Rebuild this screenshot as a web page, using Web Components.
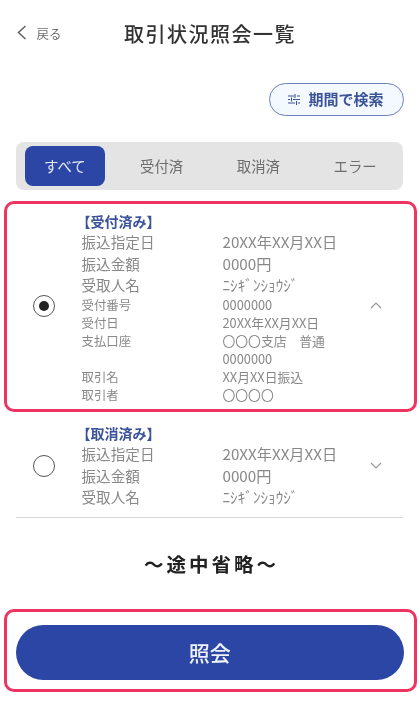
<!DOCTYPE html>
<html lang="ja">
<head>
<meta charset="utf-8">
<title>取引状況照会一覧</title>
<style>
  html, body { margin: 0; background: #fff; }
  /* the reference is a soft upscaled capture */
  body { font-family: "Noto Sans CJK JP", "Noto Sans", sans-serif; color: #777; filter: blur(0.4px); }
</style>
</head>
<body>
<app-header title-text="取引状況照会一覧" back="戻る"></app-header>
<search-button>期間で検索</search-button>
<tab-bar>
  <tab-item active>すべて</tab-item>
  <tab-item>受付済</tab-item>
  <tab-item>取消済</tab-item>
  <tab-item>エラー</tab-item>
</tab-bar>
<txn-item status="受付済み" checked open highlight>
  <txn-row label="振込指定日" value="20XX年XX月XX日"></txn-row>
  <txn-row label="振込金額" value="0000円"></txn-row>
  <txn-row label="受取人名" value="ﾆｼｷﾞﾝｼｮｳｼﾞ"></txn-row>
  <txn-row small label="受付番号" value="0000000"></txn-row>
  <txn-row small label="受付日" value="20XX年XX月XX日"></txn-row>
  <txn-row small label="支払口座" value="〇〇〇支店&#12288;普通 0000000"></txn-row>
  <txn-row small label="取引名" value="XX月XX日振込"></txn-row>
  <txn-row small label="取引者" value="〇〇〇〇"></txn-row>
</txn-item>
<txn-item status="取消済み">
  <txn-row label="振込指定日" value="20XX年XX月XX日"></txn-row>
  <txn-row label="振込金額" value="0000円"></txn-row>
  <txn-row label="受取人名" value="ﾆｼｷﾞﾝｼｮｳｼﾞ"></txn-row>
</txn-item>
<list-divider></list-divider>
<omit-note>〜途中省略〜</omit-note>
<submit-bar>照会</submit-bar>

<script>
// small helper so every element below gets an open shadow root
function shadow(el, html) {
  el.attachShadow({ mode: 'open' });
  el.shadowRoot.innerHTML = html;
}

class AppHeader extends HTMLElement {
  connectedCallback() {
    shadow(this, `
      <style>
        :host { display: grid; grid-template-columns: 1fr auto 1fr; align-items: center; box-sizing: border-box; height: 68px; padding: 0 17px 2px; }
        .back { display: flex; align-items: center; gap: 9.5px; font-size: 12.5px; color: #6e6e6e; }
        svg { width: 10px; height: 15px; margin-top: -2px; }
        h1 { margin: 0; font-size: 20px; font-weight: 500; letter-spacing: 1.5px; color: #333; }
      </style>
      <div class="back">
        <svg viewBox="0 0 10 15"><path d="M8.5 1 L1.5 7.5 L8.5 14" fill="none" stroke="#666" stroke-width="1.6"/></svg>
        <span>${this.getAttribute('back')}</span>
      </div>
      <h1>${this.getAttribute('title-text')}</h1>
      <div></div>
    `);
  }
}
customElements.define('app-header', AppHeader);

class SearchButton extends HTMLElement {
  connectedCallback() {
    shadow(this, `
      <style>
        :host { display: flex; justify-content: flex-end; padding: 15px 16.5px 0 0; }
        .btn { box-sizing: border-box; display: flex; align-items: center; justify-content: center; gap: 8px; width: 135px; height: 33px; padding-bottom: 2px;
          border: 1.5px solid #6a80c0; border-radius: 17px; background: #f4f8ff; color: #3a5399; font-size: 15px; font-weight: 700; }
        svg { width: 12px; height: 11px; margin-top: 2px; }
      </style>
      <div class="btn">
        <svg viewBox="0 0 12 11" fill="none" stroke="#3a5399" stroke-width="1.1">
          <path d="M0 2H6M9 2H12M7 0V4M0 5.5H2M5 5.5H12M3.5 3.5V7.5M0 9H7M10 9H12M8.5 7V11"/>
        </svg>
        <span><slot></slot></span>
      </div>
    `);
  }
}
customElements.define('search-button', SearchButton);

class TabBar extends HTMLElement {
  constructor() {
    super();
    shadow(this, `
      <style>
        :host { display: grid; grid-template-columns: repeat(4, 1fr); height: 48px; margin: 26px 17px 0 16px; background: #e4e4e4; border-radius: 8px; }
      </style>
      <slot></slot>
    `);
  }
}
customElements.define('tab-bar', TabBar);

class TabItem extends HTMLElement {
  constructor() {
    super();
    shadow(this, `
      <style>
        :host { display: flex; padding: 4px 8px 4px 9px; font-size: 14.4px; color: #6e6e6e; }
        div { flex: 1; display: flex; align-items: center; justify-content: center; padding-bottom: 2px; border-radius: 8px; }
        :host([active]) div { background: #2b46a5; color: #e8ecf8; }
      </style>
      <div><slot></slot></div>
    `);
  }
}
customElements.define('tab-item', TabItem);

class TxnItem extends HTMLElement {
  connectedCallback() {
    const chevron = this.hasAttribute('open') ? 'M1 7L6 2L11 7' : 'M1 2L6 7L11 2';
    shadow(this, `
      <style>
        :host { display: grid; grid-template-columns: 74.5px 1fr 48px; align-items: center; box-sizing: border-box; margin: 0 3px 0 4px;
          padding: 8.5px 0 6.5px; border: 3.5px solid transparent; border-radius: 10px; --shift: 0px; }
        :host([highlight]) { margin-top: 11px; padding: 7.5px 0 5.5px; border-color: #ee3561; --shift: 4px; }
        .radio { justify-self: end; box-sizing: border-box; width: 22px; height: 22px; margin: 0 26.5px var(--shift) 0; border: 1.6px solid #555; border-radius: 50%; display: flex; align-items: center; justify-content: center; }
        .dot { width: 10px; height: 10px; border-radius: 50%; background: #222; }
        h2 { margin: 0 0 0 -5px; height: 19.5px; line-height: 19.5px; font-size: 14px; font-weight: 700; color: #3a5399; }
        svg { width: 12px; height: 9px; justify-self: start; margin: 0 0 var(--shift) 4px; }
      </style>
      <div class="radio">${this.hasAttribute('checked') ? '<div class="dot"></div>' : ''}</div>
      <div>
        <h2>【${this.getAttribute('status')}】</h2>
        <slot></slot>
      </div>
      <svg viewBox="0 0 12 9"><path d="${chevron}" fill="none" stroke="#999" stroke-width="1.2"/></svg>
    `);
  }
}
customElements.define('txn-item', TxnItem);

class TxnRow extends HTMLElement {
  connectedCallback() {
    shadow(this, `
      <style>
        :host { display: grid; grid-template-columns: 141px 132px; line-height: 21.5px; font-size: 14.6px; color: #888; }
        .v { font-size: 15.2px; }
        :host([small]) { line-height: 18px; font-size: 12.4px; }
        :host([small]) .v { font-size: 12.8px; }
      </style>
      <span>${this.getAttribute('label')}</span>
      <span class="v">${this.getAttribute('value')}</span>
    `);
  }
}
customElements.define('txn-row', TxnRow);

class ListDivider extends HTMLElement {
  constructor() {
    super();
    shadow(this, `<style>:host { display: block; height: 1px; margin: 0 17px 0 16px; background: #d8d8d8; }</style>`);
  }
}
customElements.define('list-divider', ListDivider);

class OmitNote extends HTMLElement {
  constructor() {
    super();
    shadow(this, `
      <style>
        :host { display: flex; align-items: center; justify-content: center; height: 91px; padding-left: 3px; font-size: 19.5px; font-weight: 700; letter-spacing: 3px; color: #222; }
      </style>
      <slot></slot>
    `);
  }
}
customElements.define('omit-note', OmitNote);

class SubmitBar extends HTMLElement {
  constructor() {
    super();
    shadow(this, `
      <style>
        :host { display: block; margin: 0 3px 0 4px; padding: 12.5px 10px 9.5px 8.5px; border: 3.5px solid #ee3561; border-radius: 10px; }
        div { height: 55px; display: flex; align-items: center; justify-content: center; border-radius: 28px; background: #2b46a5; color: #f0f2fa; font-size: 21px; font-weight: 500; }
      </style>
      <div><slot></slot></div>
    `);
  }
}
customElements.define('submit-bar', SubmitBar);
</script>
</body>
</html>
